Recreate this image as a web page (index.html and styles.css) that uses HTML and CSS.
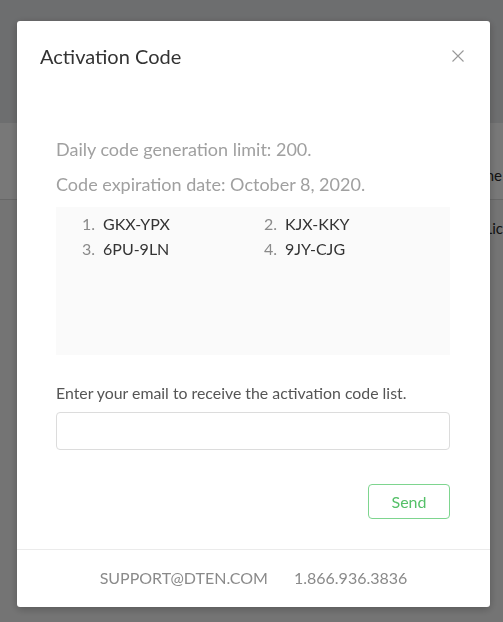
FILE: index.html
```html
<!DOCTYPE html>
<html lang="en">
<head>
<meta charset="utf-8">
<title>Activation Code</title>
<link rel="stylesheet" href="styles.css">
</head>
<body>
<div class="page">
  <div class="page-top"></div>
  <div class="page-band">
    <span class="bg-text">Name</span>
  </div>
  <div class="page-rows">
    <span class="bg-text">Lic</span>
  </div>
</div>

<div class="overlay">
  <div class="modal">
    <div class="modal-header">
      <h2 class="modal-title">Activation Code</h2>
      <button class="close" aria-label="Close">
        <svg width="12" height="12" viewBox="0 0 12 12"><path d="M0.5 0.5 L11.5 11.5 M11.5 0.5 L0.5 11.5" stroke="#999" stroke-width="1.1" fill="none"/></svg>
      </button>
    </div>
    <div class="modal-body">
      <p class="info">Daily code generation limit: 200.</p>
      <p class="info">Code expiration date: October 8, 2020.</p>
      <div class="code-box">
        <ol class="codes">
          <li>GKX-YPX</li>
          <li>KJX-KKY</li>
          <li>6PU-9LN</li>
          <li>9JY-CJG</li>
        </ol>
      </div>
      <label class="email-label" for="email">Enter your email to receive the activation code list.</label>
      <input id="email" class="email-input" type="text">
      <div class="actions">
        <button class="send">Send</button>
      </div>
    </div>
    <div class="modal-footer">
      <span>SUPPORT@DTEN.COM</span>
      <span>1.866.936.3836</span>
    </div>
  </div>
</div>
</body>
</html>
```

FILE: styles.css
```css
* { box-sizing: border-box; }
html, body { margin: 0; padding: 0; }
body {
  width: 503px;
  height: 622px;
  overflow: hidden;
  font-family: Lato, "Open Sans", sans-serif;
  background: #f4f4f4;
  position: relative;
}
.page-top { height: 123px; background: #e8e9eb; }
.page-band {
  height: 77px;
  background: #ffffff;
  border-bottom: 1px solid #dcdcdc;
  padding: 42px 1px 0 0;
  display: flex;
  justify-content: flex-end;
}
.page-rows {
  height: 422px;
  background: #f6f6f6;
  padding: 18px 0 0 0;
  display: flex;
  justify-content: flex-end;
  align-items: flex-start;
}
.bg-text { font-size: 15px; color: #2a2a2a; white-space: nowrap; line-height: 20px; }

.overlay {
  position: fixed;
  inset: 0;
  background: rgba(0, 0, 0, 0.53);
  padding: 21px 0 0 17px;
}
.modal {
  width: 473px;
  height: 586px;
  background: #fff;
  border-radius: 3px;
  box-shadow: 0 2px 8px rgba(0, 0, 0, 0.25);
  display: flex;
  flex-direction: column;
}
.modal-header {
  display: flex;
  justify-content: space-between;
  align-items: flex-start;
  padding: 20px 26px 0 23px;
}
.modal-title {
  margin: 0;
  font-size: 20px;
  line-height: 30px;
  font-weight: 400;
  color: #333;
}
.close {
  border: 0;
  background: none;
  padding: 0;
  margin-top: 9px;
  width: 12px;
  height: 12px;
  display: block;
  line-height: 0;
}
.modal-body {
  flex: 1;
  padding: 66px 40px 0 39px;
  display: flex;
  flex-direction: column;
}
.info {
  margin: 0 0 10px 0;
  font-size: 18px;
  line-height: 25px;
  color: #a0a0a0;
}
.code-box {
  margin-top: 0;
  height: 148px;
  background: #fafafa;
  padding-top: 4px;
}
.codes {
  margin: 0;
  padding: 0 0 0 26px;
  list-style: none;
  counter-reset: code;
  display: grid;
  grid-template-columns: 182px 1fr;
  font-size: 16px;
  line-height: 25px;
  color: #333;
}
.codes li {
  counter-increment: code;
  display: flex;
}
.codes li::before {
  content: counter(code) ".";
  width: 21px;
  flex: none;
  color: #8a8a8a;
}
.email-label {
  margin-top: 27px;
  font-size: 15.85px;
  line-height: 22px;
  color: #555;
}
.email-input {
  margin-top: 8px;
  height: 38px;
  width: 100%;
  border: 1px solid #dcdcdc;
  border-radius: 4px;
  background: #fff;
  font: inherit;
}
.actions {
  margin-top: 34px;
  display: flex;
  justify-content: flex-end;
}
.send {
  width: 82px;
  height: 35px;
  border: 1px solid #7ed58f;
  border-radius: 4px;
  background: #fff;
  color: #55c068;
  font-family: Lato, sans-serif;
  font-size: 16px;
}
.modal-footer {
  height: 58px;
  border-top: 1px solid #ebebeb;
  display: flex;
  justify-content: center;
  align-items: center;
  gap: 26px;
  font-size: 16px;
  color: #8a8a8a;
  padding-bottom: 2px;
}
```
